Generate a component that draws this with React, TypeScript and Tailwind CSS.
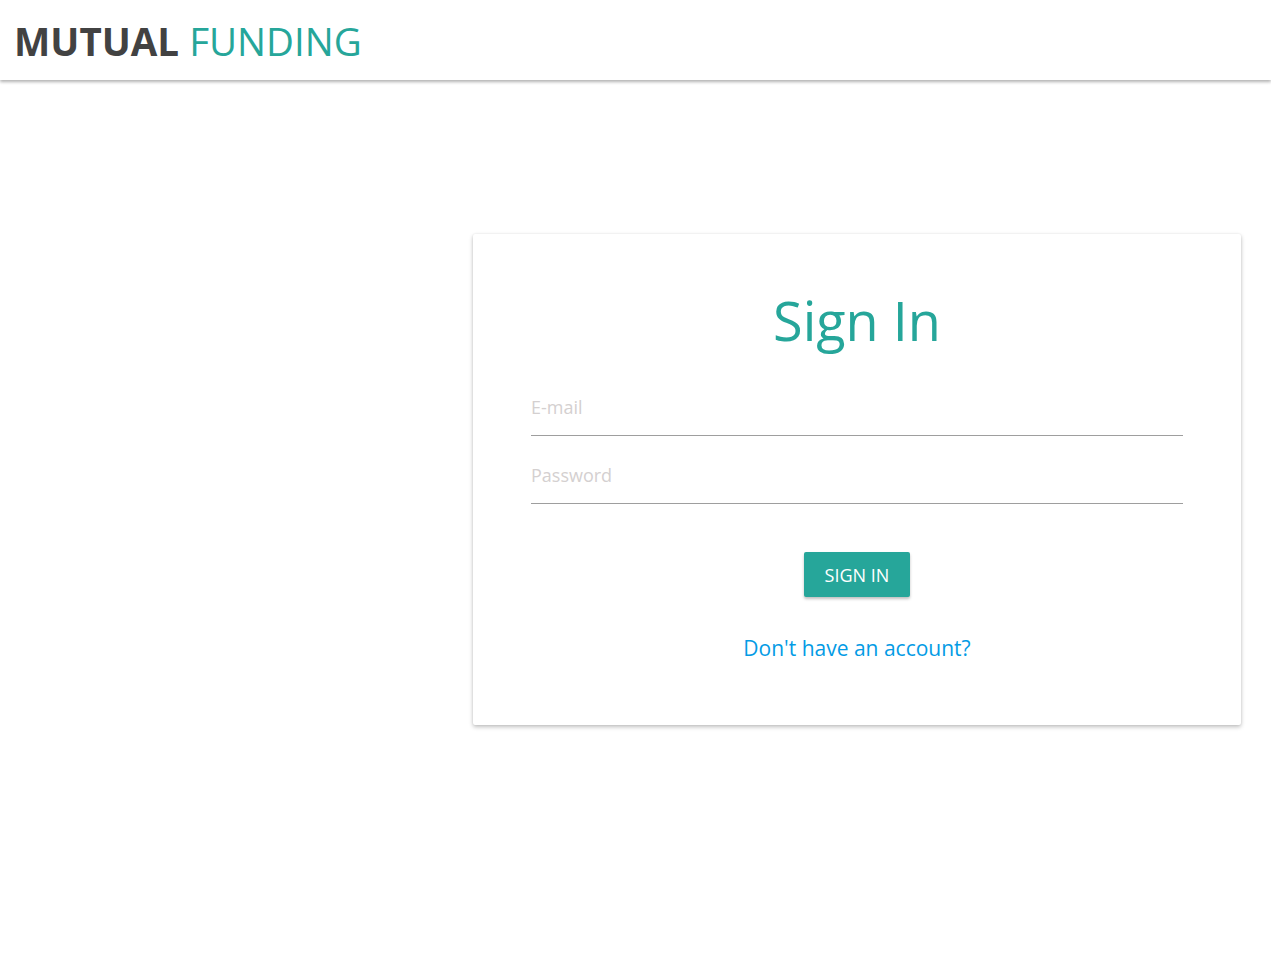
import React from 'react';

export default function App() {
  return (
    <div className="min-h-[953px] bg-white" style={{ fontFamily: '"Open Sans", sans-serif' }}>
      {/* Header */}
      <header className="h-[80px] bg-white shadow-[0_2px_3px_rgba(0,0,0,0.3)] flex items-center px-[14px]">
        <h1 className="text-[38.5px] leading-none pt-[2px]">
          <span className="font-bold text-[#424242]">MUTUAL</span>{' '}
          <span className="font-medium text-[#26a69a]">FUNDING</span>
        </h1>
      </header>

      {/* Sign in card */}
      <div className="flex justify-end pr-[30px] pt-[154px]">
        <div className="w-[768px] h-[491px] bg-white rounded-[2px] shadow-[0_2px_4px_rgba(0,0,0,0.25),0_0_2px_rgba(0,0,0,0.08)] px-[58px] pt-[50px]">
          <h2 className="text-center text-[54px] leading-[72px] font-medium text-[#26a69a]">Sign In</h2>

          <form className="mt-[35px] flex flex-col">
            <input
              type="email"
              placeholder="E-mail"
              className="h-[45px] pb-[12px] border-b border-[#9e9e9e] text-[18px] text-[#333] placeholder:text-[#d4d0d0] outline-none bg-transparent"
            />
            <input
              type="password"
              placeholder="Password"
              className="mt-[23px] h-[45px] pb-[12px] border-b border-[#9e9e9e] text-[18px] text-[#333] placeholder:text-[#d4d0d0] outline-none bg-transparent"
            />

            <div className="flex justify-center mt-[48px]">
              <button
                type="button"
                className="w-[106px] h-[45px] pt-[1px] rounded-[2px] bg-[#26a69a] text-white text-[18px] shadow-[0_2px_3px_rgba(0,0,0,0.25)]"
              >
                SIGN IN
              </button>
            </div>

            <div className="text-center mt-[36px]">
              <a href="#" className="text-[21px] font-medium text-[#039be5]">Don't have an account?</a>
            </div>
          </form>
        </div>
      </div>
    </div>
  );
}
